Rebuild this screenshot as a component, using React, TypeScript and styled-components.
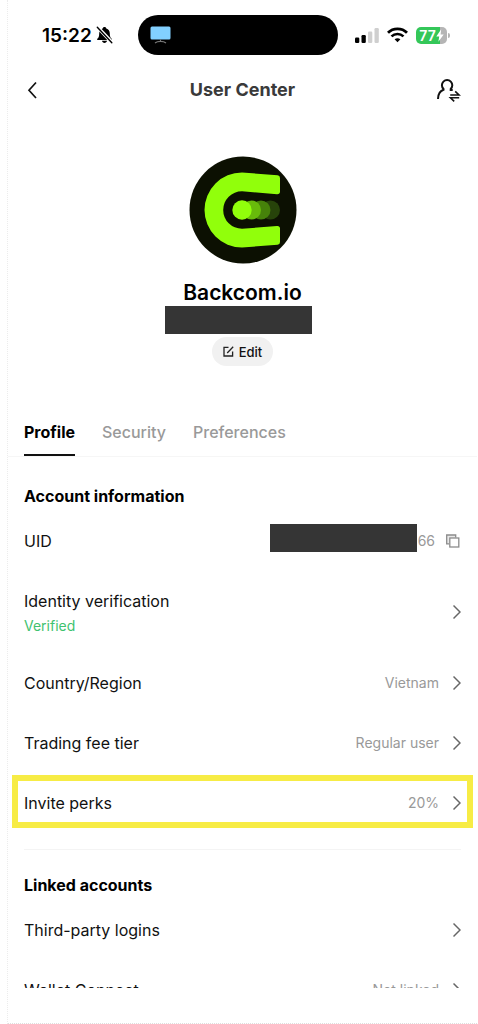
import React from "react";
import styled, { createGlobalStyle } from "styled-components";

const GlobalStyle = createGlobalStyle`
  *, *::before, *::after { box-sizing: border-box; }
  body {
    margin: 0;
    background: #fff;
    color: #111;
    font-family: Inter, "Liberation Sans", sans-serif;
  }
  button {
    margin: 0;
    padding: 0;
    border: 0;
    background: none;
    color: inherit;
    font: inherit;
    cursor: pointer;
  }
  h1, h2, p { margin: 0; }
  svg { display: block; flex: none; }
`;

const Screen = styled.div`
  display: flex;
  flex-direction: column;
  height: 100vh;
  margin: 0 1px 0 7px;
  border-left: 1px dotted #ececec;
  border-bottom: 1px dotted #dedede;
`;

const StatusBar = styled.div`
  display: grid;
  grid-template-columns: 1fr 200px 1fr;
  align-items: center;
  flex: none;
  height: 70px;
  padding-right: 9px;
`;

const Clock = styled.div`
  display: flex;
  align-items: center;
  gap: 4px;
  padding-left: 34px;
  color: #000;
  font-size: 19px;
  font-weight: 600;
`;

const Island = styled.div`
  display: flex;
  align-items: center;
  height: 40px;
  padding-left: 12px;
  border-radius: 20px;
  background: #000;
`;

const Indicators = styled.div`
  display: flex;
  align-items: center;
  gap: 8px;
  padding-left: 17px;
`;

const Battery = styled.div`
  display: flex;
  align-items: center;
  gap: 1px;

  &::after {
    content: "";
    width: 2px;
    height: 5px;
    border-radius: 0 2px 2px 0;
    background: #b5b5b5;
  }
`;

const BatteryLevel = styled.div`
  display: flex;
  align-items: center;
  justify-content: center;
  width: 31px;
  height: 17px;
  border-radius: 5px;
  background: linear-gradient(to right, #34c759 77%, #b5b5b5 77%);
  color: #fff;
  font-size: 14px;
  font-weight: 600;
  line-height: 17px;
`;

const Header = styled.header`
  display: grid;
  grid-template-columns: 32px 1fr 32px;
  align-items: center;
  flex: none;
  height: 40px;
  padding: 0 16px;
`;

const Title = styled.h1`
  color: #3a3a3a;
  font-size: 18px;
  font-weight: 700;
  line-height: 24px;
  text-align: center;
`;

const IconButton = styled.button<{ $end?: boolean }>`
  display: flex;
  justify-content: ${(p) => (p.$end ? "flex-end" : "flex-start")};
`;

const Scroller = styled.main`
  flex: 1;
  min-height: 0;
  overflow-y: auto;
  scrollbar-width: none;
`;

const HomeArea = styled.div`
  flex: none;
  height: 35px;
`;

const Hero = styled.section`
  display: flex;
  flex-direction: column;
  align-items: center;
  padding: 46px 16px 44px;
`;

const Name = styled.h2`
  margin-top: 16px;
  color: #000;
  font-size: 21px;
  font-weight: 600;
  line-height: 26px;
`;

const Redaction = styled.div`
  width: 147px;
  height: 28px;
  background: #353535;
`;

const MaskedContact = styled.div`
  padding-right: 8px;
`;

const EditButton = styled.button`
  display: flex;
  align-items: center;
  gap: 5px;
  height: 29px;
  margin-top: 3px;
  padding: 0 11px;
  border-radius: 15px;
  background: #f1f1f1;
  color: #111;
  font-size: 13px;
  font-weight: 500;
`;

const Tabs = styled.div`
  display: flex;
  gap: 27px;
  margin-bottom: 4px;
  padding: 0 16px;
  border-bottom: 1px solid #f6f6f6;
`;

const Tab = styled.button<{ $active?: boolean }>`
  height: 46px;
  border-bottom: 2px solid ${(p) => (p.$active ? "#111" : "transparent")};
  color: ${(p) => (p.$active ? "#000" : "#999")};
  font-size: 16px;
  font-weight: ${(p) => (p.$active ? 700 : 500)};
  line-height: 24px;
`;

const Section = styled.section`
  margin: 0 16px;
  padding: 20px 0 16px;

  & + & { border-top: 1px solid #f4f4f4; }
`;

const SectionTitle = styled.h2`
  color: #000;
  font-size: 16px;
  font-weight: 700;
  line-height: 30px;
`;

const Row = styled.div<{ $tall?: boolean; $highlight?: boolean }>`
  position: relative;
  display: flex;
  align-items: center;
  justify-content: space-between;
  width: 100%;
  height: ${(p) => (p.$tall ? 82 : 60)}px;
  text-align: left;

  &::after {
    content: "";
    display: ${(p) => (p.$highlight ? "block" : "none")};
    position: absolute;
    inset: 2px -12px 5px;
    border: 6px solid #f7ec45;
    pointer-events: none;
  }
`;

const Label = styled.span<{ $stacked?: boolean }>`
  padding-top: ${(p) => (p.$stacked ? 4 : 0)}px;
  color: #111;
  font-size: 16px;
  line-height: 24px;
`;

const Status = styled.span`
  display: block;
  color: #3fc26f;
  font-size: 14px;
  line-height: 26px;
`;

const Value = styled.span<{ $tight?: boolean }>`
  display: flex;
  align-items: center;
  gap: ${(p) => (p.$tight ? 10 : 14)}px;
  color: #999;
  font-size: 14px;
  line-height: 22px;
`;

const MaskedId = styled.span`
  display: flex;
  align-items: flex-end;
  gap: 1px;
  padding-bottom: 6px;
`;

const BellOff = () => (
  <svg width="17" height="18" viewBox="0 0 17 18" fill="#000" aria-hidden="true">
    <path d="M8.500 1c1 0 1.700.6 1.800 1.500 2.200.7 3.500 2.600 3.500 4.900 0 3 .5 4.200 1.900 5.400.5.400.2 1.200-.4 1.200H1.700c-.6 0-.9-.8-.4-1.200 1.400-1.200 1.900-2.400 1.900-5.400 0-2.300 1.300-4.200 3.500-4.900C6.800 1.600 7.500 1 8.500 1zM6 14.800h5c-.2 1.300-1.300 2.200-2.500 2.200s-2.300-.9-2.500-2.200z" />
    <path d="M1.500 1 16 16.500" stroke="#fff" strokeWidth="3.400" />
    <path d="M1.300 1.300 15.800 16.700" stroke="#000" strokeWidth="1.400" strokeLinecap="round" />
  </svg>
);

const Monitor = () => (
  <svg width="21" height="18" viewBox="0 0 21 18" aria-hidden="true">
    <rect x="0.500" y="0.500" width="20" height="13" rx="1.500" fill="#82d0ff" />
    <path d="M10.500 13.500v2M5 17c1.500-1.200 3.200-1.600 5.500-1.600s4 .4 5.500 1.600" fill="none" stroke="#777" strokeWidth="1.200" />
  </svg>
);

const Signal = () => (
  <svg width="24" height="16" viewBox="0 0 24 16" aria-hidden="true">
    <rect x="0" y="10.500" width="4.300" height="5.500" rx="1.200" fill="#000" />
    <rect x="6.500" y="8" width="4.300" height="8" rx="1.200" fill="#000" />
    <rect x="13" y="4.500" width="4.300" height="11.500" rx="1.200" fill="#cfcfcf" />
    <rect x="19.500" y="1" width="4.300" height="15" rx="1.200" fill="#cfcfcf" />
  </svg>
);

const Wifi = () => (
  <svg width="21" height="16" viewBox="0 0 21 16" fill="none" stroke="#000" aria-hidden="true">
    <path d="M1 5.800C6.200.6 14.800.6 20 5.800" strokeWidth="2.800" />
    <path d="M4.500 9.400c3.400-3.300 8.600-3.300 12 0" strokeWidth="2.600" />
    <path d="M7.600 12.300c1.700-1.500 4.100-1.500 5.800 0l-2.900 2.900z" fill="#000" stroke="none" />
  </svg>
);

const Bolt = () => (
  <svg width="8" height="13" viewBox="0 0 8 13" fill="#fff" aria-hidden="true">
    <path d="M5.200.3.300 7.400h2.900L2.400 12.700 7.700 5.400H4.600z" />
  </svg>
);

const Back = () => (
  <svg width="16" height="20" viewBox="0 0 16 20" fill="none" stroke="#111" strokeWidth="1.700" aria-hidden="true">
    <path d="M12 2.500 5 10.200l7 7.800" />
  </svg>
);

const SwitchUser = () => (
  <svg width="24" height="24" viewBox="0 0 24 24" fill="none" stroke="#111" strokeWidth="2" aria-hidden="true">
    <path d="M1 21c0-5 1.800-8 5.500-9.300V11A5.200 5.200 0 1 1 13.700 11v1H15.700" />
    <path d="M13.200 17H22L18.200 13.400M22.200 19.800H13.500L17.200 23.300" strokeWidth="1.600" />
  </svg>
);

const Avatar = () => (
  <svg width="108" height="108" viewBox="0 0 108 108" role="img" aria-label="Backcom.io avatar">
    <circle cx="54" cy="54" r="53.500" fill="#0c1002" />
    <path
      d="M53 16.500 88.500 19.200Q91 19.400 91 22V35.500Q91 38.300 88 38.200L53 35.200A18.800 18.800 0 0 0 53 72.800L88 70Q91 69.800 91 72.500V86Q91 88.600 88.500 88.800L53 91.500A37.500 37.500 0 0 1 53 16.500Z"
      fill="#91ff0b"
    />
    <circle cx="81.500" cy="54" r="9.500" fill="#27430a" />
    <circle cx="72" cy="54" r="9.500" fill="#46820a" />
    <circle cx="62.500" cy="54" r="9.500" fill="#68bb0b" />
    <circle cx="53" cy="54" r="9.700" fill="#91ff0b" />
  </svg>
);

const Pencil = () => (
  <svg width="11" height="11" viewBox="0 0 11 11" fill="none" stroke="#222" strokeWidth="1.300" aria-hidden="true">
    <path d="M5.500 1.400H1v8.600h8.600V5.500M4.200 7l6-6.200" />
  </svg>
);

const Copy = () => (
  <svg width="16" height="15" viewBox="0 0 16 15" fill="none" stroke="#8c8c8c" strokeWidth="1.300" aria-hidden="true">
    <path d="M4 9.800H1.700V1h9v2.500" fill="#e8e8e8" />
    <rect x="4.800" y="4" width="9" height="9" fill="#fff" />
  </svg>
);

const Chevron = () => (
  <svg width="8" height="16" viewBox="0 0 8 16" fill="none" stroke="#666" strokeWidth="1.500" aria-hidden="true">
    <path d="M.5 1.500 7 8 .5 14.500" />
  </svg>
);

type LinkRowProps = {
  label: string;
  value?: string;
  status?: string;
  highlight?: boolean;
};

const LinkRow = ({ label, value, status, highlight }: LinkRowProps) => (
  <Row as="button" $tall={Boolean(status)} $highlight={highlight}>
    <Label $stacked={Boolean(status)}>
      {label}
      {status && <Status>{status}</Status>}
    </Label>
    <Value>
      {value}
      <Chevron />
    </Value>
  </Row>
);

export default function App() {
  return (
    <>
      <GlobalStyle />
      <Screen>
        <StatusBar>
          <Clock>
            15:22
            <BellOff />
          </Clock>
          <Island>
            <Monitor />
          </Island>
          <Indicators>
            <Signal />
            <Wifi />
            <Battery>
              <BatteryLevel>
                77
                <Bolt />
              </BatteryLevel>
            </Battery>
          </Indicators>
        </StatusBar>
        <Header>
          <IconButton aria-label="Back">
            <Back />
          </IconButton>
          <Title>User Center</Title>
          <IconButton $end aria-label="Switch account">
            <SwitchUser />
          </IconButton>
        </Header>
        <Scroller>
          <Hero>
            <Avatar />
            <Name>Backcom.io</Name>
            <MaskedContact>
              <Redaction />
            </MaskedContact>
            <EditButton>
              <Pencil />
              Edit
            </EditButton>
          </Hero>
          <Tabs role="tablist">
            <Tab role="tab" aria-selected="true" $active>
              Profile
            </Tab>
            <Tab role="tab" aria-selected="false">Security</Tab>
            <Tab role="tab" aria-selected="false">Preferences</Tab>
          </Tabs>
          <Section>
            <SectionTitle>Account information</SectionTitle>
            <Row>
              <Label>UID</Label>
              <Value $tight>
                <MaskedId>
                  <Redaction />
                  66
                </MaskedId>
                <IconButton aria-label="Copy UID">
                  <Copy />
                </IconButton>
              </Value>
            </Row>
            <LinkRow label="Identity verification" status="Verified" />
            <LinkRow label="Country/Region" value="Vietnam" />
            <LinkRow label="Trading fee tier" value="Regular user" />
            <LinkRow label="Invite perks" value="20%" highlight />
          </Section>
          <Section>
            <SectionTitle>Linked accounts</SectionTitle>
            <LinkRow label="Third-party logins" />
            <LinkRow label="Wallet Connect" value="Not linked" />
          </Section>
        </Scroller>
        <HomeArea />
      </Screen>
    </>
  );
}
